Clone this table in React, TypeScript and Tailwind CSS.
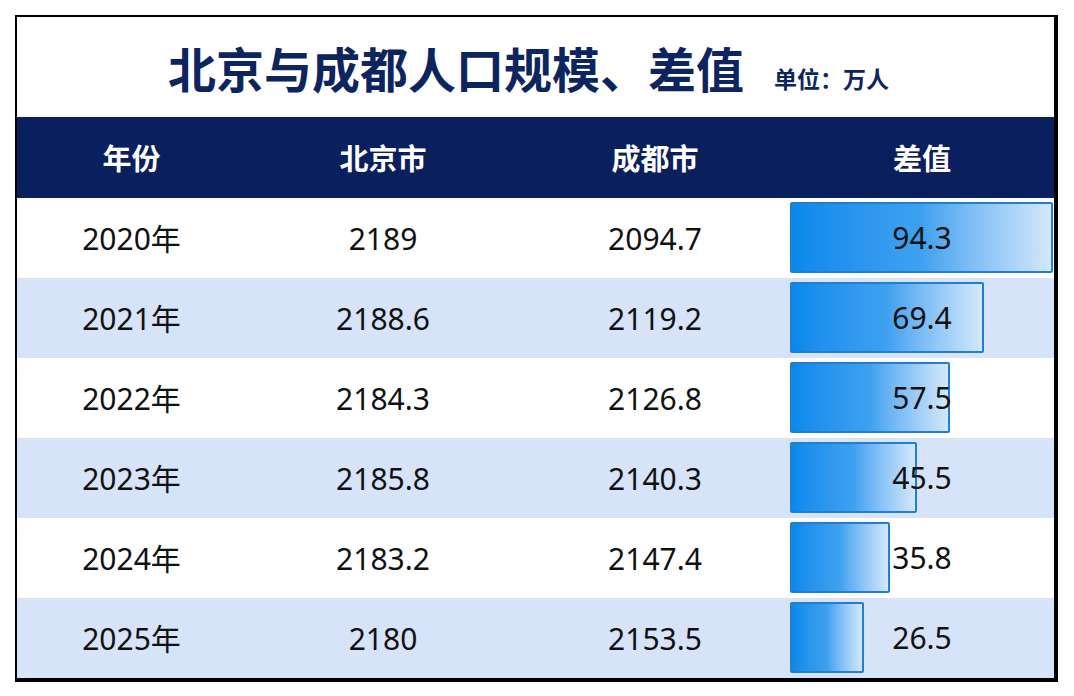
const rows = [
  { year: "2020年", bj: "2189", cd: "2094.7", diff: 94.3 },
  { year: "2021年", bj: "2188.6", cd: "2119.2", diff: 69.4 },
  { year: "2022年", bj: "2184.3", cd: "2126.8", diff: 57.5 },
  { year: "2023年", bj: "2185.8", cd: "2140.3", diff: 45.5 },
  { year: "2024年", bj: "2183.2", cd: "2147.4", diff: 35.8 },
  { year: "2025年", bj: "2180", cd: "2153.5", diff: 26.5 },
];

const maxDiff = 94.3;
const barMax = 263;

const cols = "grid grid-cols-[229px_274px_270px_264px]";

export default function App() {
  return (
    <div className="w-[1074px] h-[696px] bg-white pt-[15px] pl-[15px] font-['Noto_Sans','Noto_Sans_CJK_SC',sans-serif]">
      <div className="w-[1043px] border-l-2 border-t-2 border-r-4 border-b-4 border-black bg-white">
        {/* title */}
        <div className="h-[100px] flex items-baseline justify-center gap-[30px] pt-[20px] pr-[14px]">
          <h1 className="text-[48px] leading-[60px] font-bold text-[#0d255e] font-['Noto_Sans_CJK_SC',sans-serif]">
            北京与成都人口规模、差值
          </h1>
          <span className="text-[23px] font-bold text-[#0d255e] font-['Noto_Sans_CJK_SC',sans-serif]">
            单位：万人
          </span>
        </div>

        {/* header */}
        <div className={`${cols} h-[81px] bg-[#0a1f5e] text-white text-[29px] font-bold font-['Noto_Sans_CJK_SC',sans-serif]`}>
          <div className="flex items-center justify-center">年份</div>
          <div className="flex items-center justify-center">北京市</div>
          <div className="flex items-center justify-center">成都市</div>
          <div className="flex items-center justify-center">差值</div>
        </div>

        {/* rows */}
        {rows.map((r, i) => (
          <div
            key={r.year}
            className={`${cols} h-[80px] text-[30px] text-[#111111] ${
              i % 2 === 1 ? "bg-[#d6e3f8]" : "bg-white"
            }`}
          >
            <div className="flex items-center justify-center">{r.year}</div>
            <div className="flex items-center justify-center">{r.bj}</div>
            <div className="flex items-center justify-center">{r.cd}</div>
            <div className="grid items-center pt-[4px] pb-[5px]">
              <div
                className="col-start-1 row-start-1 h-full justify-self-start rounded-[2px] border-2 border-[#1f80d0] bg-gradient-to-r from-[#0689ec] via-[#3ea1f0] to-[#d3e8fa]"
                style={{ width: Math.round((r.diff / maxDiff) * barMax) }}
              />
              <div className="col-start-1 row-start-1 justify-self-center">
                {r.diff.toFixed(1)}
              </div>
            </div>
          </div>
        ))}
      </div>
    </div>
  );
}
